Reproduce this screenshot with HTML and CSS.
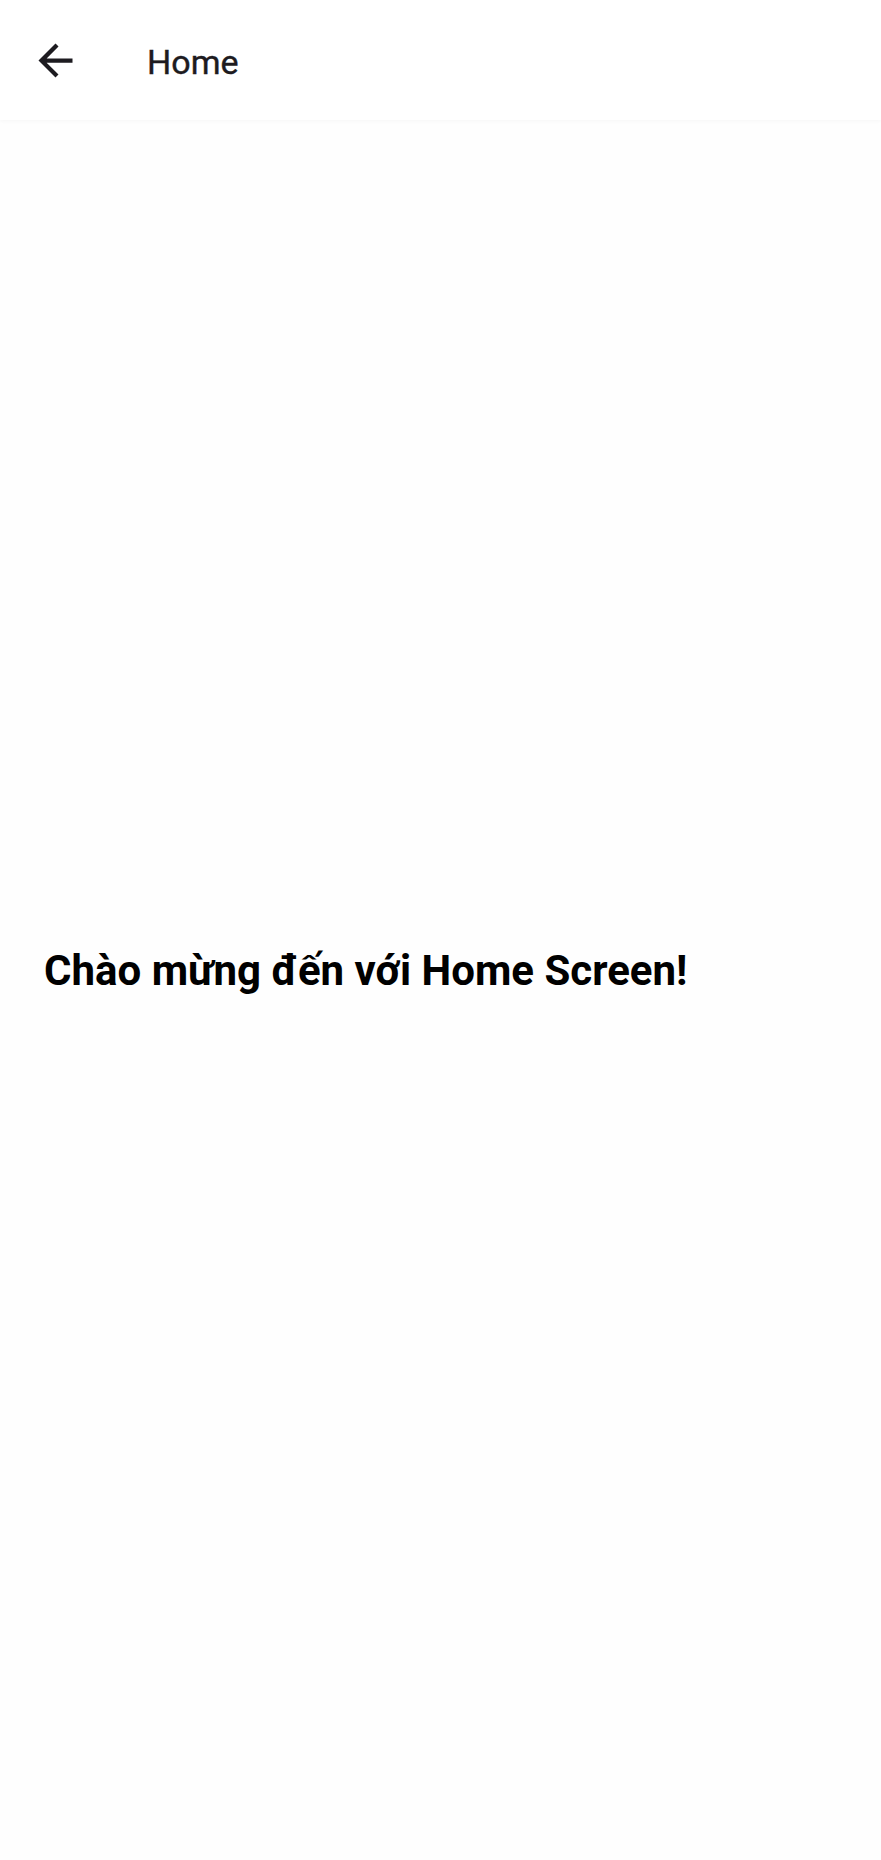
FILE: index.html
```html
<!DOCTYPE html>
<html lang="vi">
<head>
<meta charset="utf-8">
<title>Home</title>
<link rel="stylesheet" href="styles.css">
</head>
<body>
<div class="app">
  <header class="appbar">
    <button class="back" aria-label="Back">
      <svg viewBox="0 0 24 24" width="51" height="51"><path d="M20 11H7.83l5.59-5.59L12 4l-8 8 8 8 1.41-1.41L7.83 13H20v-2z" fill="#1d1b20"/></svg>
    </button>
    <h1 class="title">Home</h1>
  </header>
  <main class="content">
    <p class="welcome">Chào mừng đến với Home Screen!</p>
  </main>
</div>
</body>
</html>
```
FILE: styles.css
```css
html, body {
  margin: 0;
  padding: 0;
  height: 100%;
}
body {
  background: #fefefe;
  font-family: Roboto, "Noto Sans", sans-serif;
}
.app {
  display: flex;
  flex-direction: column;
  min-height: 100vh;
}
.appbar {
  height: 120px;
  background: #ffffff;
  display: flex;
  align-items: center;
  box-shadow: 0 2px 3px rgba(0,0,0,0.025);
  position: relative;
  z-index: 1;
}
.back {
  border: 0;
  background: none;
  padding: 0;
  margin-left: 30px;
  width: 51px;
  height: 51px;
  display: flex;
  align-items: center;
  justify-content: center;
}
.back svg {
  display: block;
}
.title {
  margin: 4px 0 0 66px;
  font-size: 34px;
  font-weight: 400;
  color: #1d1b20;
  -webkit-text-stroke: 0.4px #1d1b20;
}
.content {
  flex: 1;
  display: flex;
  flex-direction: column;
  justify-content: center;
  padding: 0 0 40px 44px;
}
.welcome {
  margin: 0;
  font-size: 42px;
  font-weight: 700;
  color: #000;
}
```
